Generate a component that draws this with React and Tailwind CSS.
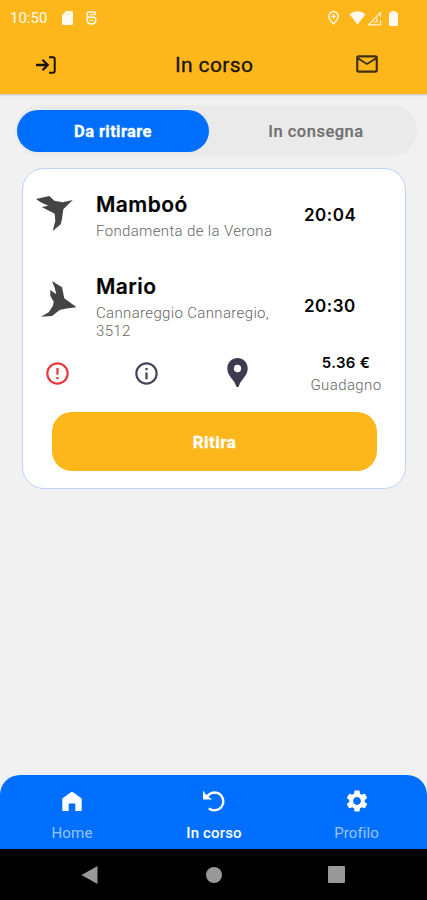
import { MdSettings, MdLocationPin, MdOutlineMailOutline, MdErrorOutline, MdInfoOutline } from 'react-icons/md';

const StatusBar = () => (
  <div className="flex h-9 items-center text-[#fffaf0]">
    <span className="ml-[10px] w-[39px] text-[15px] leading-none">10:50</span>
    <svg className="ml-[13px]" width="11" height="14" viewBox="0 0 11 14" fill="currentColor">
      <path d="M4 0H9.5Q11 0 11 1.5V12.5Q11 14 9.5 14H1.5Q0 14 0 12.5V4Z" />
      <path d="M4.3 2V4M6.3 2V4M8.3 2V4" stroke="#ffe2a0" strokeWidth="0.8" />
    </svg>
    <svg className="ml-[13px]" width="11" height="14" viewBox="0 0 11 14" fill="none" stroke="currentColor" strokeWidth="1.5">
      <path d="M9.500 4V2.500Q9.500 1 8 1H3Q1.200 1 1.200 3V4.500Q1.200 6.300 3 6.300H8Q9.800 6.300 9.800 8.500Q9.800 13 5.500 13Q1.200 13 1.200 8.800V6" />
      <path d="M3.500 3.700H9.500M3.500 9.300H7.500" strokeWidth="1.100" />
    </svg>
    <svg className="ml-auto" width="11" height="14" viewBox="0 0 11 14" fill="none" stroke="currentColor" strokeWidth="1.300">
      <path d="M5.500 13Q0.800 8.300 0.800 5.300A4.700 4.700 0 0 1 10.200 5.300Q10.200 8.300 5.500 13Z" />
      <path d="M5.500 3V7.800M3.200 5.400H7.800" />
    </svg>
    <svg className="ml-[10px]" width="17" height="14" viewBox="0 0 17 14" fill="currentColor">
      <path d="M0.500 3.200Q8.500 -2.500 16.500 3.200L8.500 13.500Z" />
    </svg>
    <svg className="ml-px" width="15" height="15" viewBox="0 0 15 15" fill="none" stroke="currentColor" strokeWidth="1.200" opacity="0.9">
      <path d="M13.300 6V1.700L1.500 13.800H13.500V9M6 11H10V6.500" />
    </svg>
    <svg className="mr-[29px] ml-[7px]" width="9" height="15" viewBox="0 0 9 15" fill="currentColor">
      <path d="M2.500 0H6.500V1.200H7.500Q9 1.200 9 2.700V13.500Q9 15 7.500 15H1.500Q0 15 0 13.500V2.700Q0 1.200 1.500 1.200H2.500Z" />
    </svg>
  </div>
);

const Header = () => (
  <header className="h-[94px] bg-[#feb71b] shadow-[0_1px_2px_rgba(90,60,60,0.3)]">
    <StatusBar />
    <div className="flex h-[58px] items-center pl-[35px] text-[#17120a]">
      <svg className="mt-[-1px]" width="22" height="18" viewBox="0 0 22 18" fill="none" stroke="currentColor" strokeWidth="2">
        <path d="M1 9H12M7.500 3.800L12.700 9L7.500 14.200" strokeWidth="2.300" />
        <path d="M14 1.200H18Q19.700 1.200 19.700 3V15Q19.700 16.800 18 16.800H14" />
      </svg>
      <h1 className="ml-[118px] w-[180px] text-[21px] leading-none font-normal tracking-[0.350px] whitespace-nowrap [-webkit-text-stroke:0.3px_#17120a]">In corso</h1>
      <MdOutlineMailOutline className="mb-[3px] ml-[-1px] text-[#3d3015]" size={26} />
    </div>
  </header>
);

const Tabs = () => (
  <div className="mt-[11px] mr-[10px] ml-[15px] flex h-[51px] items-center rounded-full bg-[#eaeaea] pl-[2px] text-[16.500px]">
    <button className="mt-px h-[42px] w-[192px] rounded-full bg-[#006ffd] pt-[3px] font-bold tracking-[0.4px] text-white [-webkit-text-stroke:0.3px_white]">Da ritirare</button>
    <button className="flex-1 pt-[4px] pl-[6px] font-medium tracking-[0.5px] text-[#707070] [-webkit-text-stroke:0.2px_#707070]">In consegna</button>
  </div>
);

const ArrivalBird = () => (
  <svg className="mt-[4px]" width="37" height="36" viewBox="0 0 37 36" fill="#444">
    <path d="M0 3L13.300 0L18.300 4.700L26.700 6.300L36.700 4L27.300 13.300L26 23L24.700 28.300L16.700 35L19.300 25L18.700 17.700L5.700 11L12.300 9.700L4.700 6.300Z" />
  </svg>
);

const DepartureBird = () => (
  <svg width="36" height="36" viewBox="0 0 36 36" fill="#444">
    <path d="M11 0L21 6.300L23.300 17.300L35.500 26.300L25.300 27.500L18.700 29L11 35L0 35.700L7.700 31.300L12 24.700L12.700 20.700L9.300 14.700V9L15.300 13.300L13.700 6.700Z" />
  </svg>
);

const Stop = ({ icon, name, address, time, timeClass }) => (
  <div className="flex">
    <div className="flex w-[73px] shrink-0 pl-[13px]">{icon}</div>
    <div className="w-[188px]">
      <h2 className="font-[Inter] text-[21px] leading-[26px] font-semibold tracking-[0.450px] text-black [-webkit-text-stroke:0.2px_black]">{name}</h2>
      <p className="mt-[4px] text-[15px] leading-[18px] font-light tracking-[0.350px] text-[#666]">{address}</p>
    </div>
    <span className={`ml-[20px] font-[Inter] text-[17px] leading-[20px] font-semibold tracking-[0.5px] text-black ${timeClass}`}>{time}</span>
  </div>
);

const OrderCard = () => (
  <section className="mt-[12px] mr-[21px] ml-[22px] h-[321px] rounded-[22px] border border-[#b9d5fa] bg-white">
    <div className="h-[82px] pt-[23px]">
      <Stop icon={<ArrivalBird />} name="Mamboó" address="Fondamenta de la Verona" time="20:04" timeClass="mt-[13px]" />
    </div>
    <div className="h-[80px] pt-[23px]">
      <Stop
        icon={<div className="mt-[7px] ml-[5px]"><DepartureBird /></div>}
        name="Mario"
        address={<>Cannareggio Cannaregio,<br />3512</>}
        time="20:30"
        timeClass="mt-[22px]"
      />
    </div>
    <div className="flex h-[81px] pt-[22px]">
      <MdErrorOutline className="mt-[6.500px] ml-[21px] text-[#e6393c]" size={27} />
      <MdInfoOutline className="mt-[6.500px] ml-[62px] text-[#45455a]" size={27} />
      <MdLocationPin className="mt-[2px] ml-[60px] text-[#3d3b50]" size={35} />
      <div className="ml-[53px] w-[76px] text-center">
        <div className="font-[Inter] text-[15px] leading-[20px] font-semibold tracking-[0.3px] text-black">5.36 €</div>
        <div className="mt-px text-[15px] leading-[22px] font-light tracking-[0.4px] text-[#666]">Guadagno</div>
      </div>
    </div>
    <button className="mr-[28px] ml-[29px] block h-[59px] w-[325px] rounded-[20px] bg-[#feb71b] pt-[2px] text-[17px] font-bold tracking-[0.5px] text-white [-webkit-text-stroke:0.3px_white]">
      Ritira
    </button>
  </section>
);

const BottomNav = () => (
  <nav className="grid h-[74px] grid-cols-3 rounded-t-[20px] bg-[#006ffd] pl-px text-center text-[15px] text-[#99c5fe]">
    <div className="flex flex-col items-center pt-[13px]">
      <svg width="20" height="26" viewBox="0 0 20 26" fill="white">
        <path d="M0.300 10.500L10 3.500L19.700 10.500V23H13.300V15.500H6.700V23H0.300Z" />
      </svg>
      <span className="mt-[8px] leading-[22px] tracking-[0.2px]">Home</span>
    </div>
    <div className="flex flex-col items-center pt-[13px] text-white">
      <svg width="24" height="26" viewBox="0 0 24 26" fill="none" stroke="currentColor" strokeWidth="2.300">
        <path d="M4.500 9Q8 4.500 13 4.500A8.900 8.900 0 1 1 6.800 20.300" />
        <path d="M1 2.500L4.200 6.700L10 11.500H1Z" fill="currentColor" stroke="none" />
      </svg>
      <span className="mt-[8px] leading-[22px] font-medium tracking-[0.150px]">In corso</span>
    </div>
    <div className="flex flex-col items-center pt-[13px] pl-px">
      <MdSettings className="text-white" size={26} />
      <span className="mt-[8px] leading-[22px] tracking-[0.1px]">Profilo</span>
    </div>
  </nav>
);

const SystemNav = () => (
  <div className="flex h-[51px] items-center bg-black pl-[81px] text-[#999]">
    <svg width="17" height="18" viewBox="0 0 17 18" fill="currentColor">
      <path d="M0.500 9L16.500 0V18Z" />
    </svg>
    <div className="ml-[108px] size-[16px] rounded-full bg-current" />
    <div className="ml-[106px] size-[17px] rounded-[1px] bg-current" />
  </div>
);

export default function App() {
  return (
    <div className="flex h-[900px] w-[427px] flex-col overflow-hidden bg-[#f1f1f1] font-[Roboto]">
      <Header />
      <Tabs />
      <OrderCard />
      <div className="mt-auto">
        <BottomNav />
        <SystemNav />
      </div>
    </div>
  );
}
